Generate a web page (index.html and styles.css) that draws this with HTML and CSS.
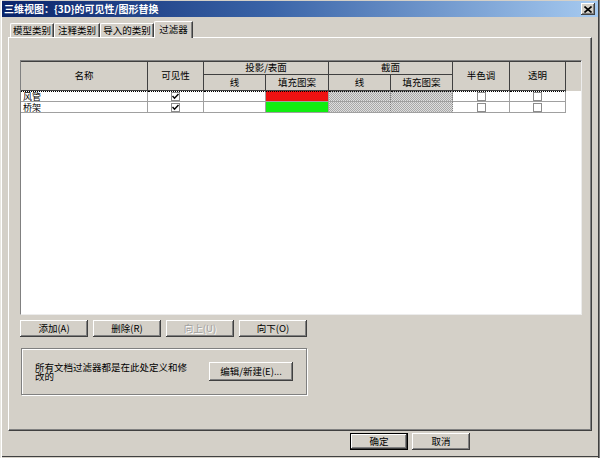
FILE: index.html
```html
<!DOCTYPE html>
<html>
<head>
<meta charset="utf-8">
<link rel="stylesheet" href="styles.css">
</head>
<body>
<div class="window">
  <div class="titlebar">
    <span class="title">三维视图：{3D}的可见性/图形替换</span>
    <span class="close"><svg width="8" height="7" viewBox="0 0 8 7"><path d="M0.5 0.5 L7.5 6.5 M7.5 0.5 L0.5 6.5" stroke="#000" stroke-width="1.6"/></svg></span>
  </div>
  <div class="tabs">
    <div class="tab t1">模型类别</div>
    <div class="tab t2">注释类别</div>
    <div class="tab t3">导入的类别</div>
    <div class="tab active">过滤器</div>
  </div>
  <div class="panel">
    <div class="frame">
      <div class="thead">
        <div class="th r2">名称</div>
        <div class="th r2">可见性</div>
        <div class="th c2">投影/表面</div>
        <div class="th c2">截面</div>
        <div class="th r2">半色调</div>
        <div class="th r2">透明</div>
        <div class="th r2 last"></div>
        <div class="th">线</div>
        <div class="th">填充图案</div>
        <div class="th">线</div>
        <div class="th">填充图案</div>
      </div>
      <div class="row first">
        <div class="td name">风管</div>
        <div class="td center"><span class="cb"><svg width="7" height="7" viewBox="0 0 7 7"><path d="M0.5 3 L2.5 5.2 L6.5 1" fill="none" stroke="#000" stroke-width="1.5"/></svg></span></div>
        <div class="td"></div>
        <div class="td red"></div>
        <div class="td hatch"></div>
        <div class="td hatch"></div>
        <div class="td center"><span class="cb"></span></div>
        <div class="td center"><span class="cb"></span></div>
      </div>
      <div class="row">
        <div class="td name">桥架</div>
        <div class="td center"><span class="cb"><svg width="7" height="7" viewBox="0 0 7 7"><path d="M0.5 3 L2.5 5.2 L6.5 1" fill="none" stroke="#000" stroke-width="1.5"/></svg></span></div>
        <div class="td"></div>
        <div class="td green"></div>
        <div class="td hatch"></div>
        <div class="td hatch"></div>
        <div class="td center"><span class="cb"></span></div>
        <div class="td center"><span class="cb"></span></div>
      </div>
    </div>
    <div class="btnrow">
      <button class="btn">添加(A)</button>
      <button class="btn">删除(R)</button>
      <button class="btn" disabled>向上(U)</button>
      <button class="btn">向下(O)</button>
    </div>
    <div class="group">
      <p class="note">所有文档过滤器都是在此处定义和修改的</p>
      <button class="btn edit">编辑/新建(E)...</button>
    </div>
  </div>
  <div class="footer">
    <button class="btn ok">确定</button>
    <button class="btn cancel">取消</button>
  </div>
</div>
</body>
</html>
```
FILE: styles.css
```css
* { box-sizing: border-box; margin: 0; padding: 0; }
html, body { width: 600px; height: 458px; overflow: hidden; background: #d4d0c8; }
body {
  font-family: "Noto Sans CJK SC", "Liberation Sans", sans-serif;
  font-size: 9.5px;
  line-height: 1;
  color: #000;
}
.window {
  width: 600px;
  height: 458px;
  padding: 1px 2px 0 2px;
  box-shadow: inset 1px 0 #e8e6e0, inset 2px 0 #fff, inset -1px 0 #808080, inset -2px 0 #404040, inset 0 -1px #d4d0c8, inset 0 -2px #404040;
}
.titlebar {
  height: 16px;
  display: flex;
  align-items: center;
  padding: 0 3px 0 2px;
  background: linear-gradient(to right, #0a246a, #3a64a8 45%, #a6caf0);
}
.title { color: #fff; font-weight: bold; font-size: 10px; }
.close {
  margin-left: auto;
  width: 14px;
  height: 12px;
  background: #d4d0c8;
  display: flex;
  align-items: center;
  justify-content: center;
  box-shadow: inset -1px -1px #404040, inset 1px 1px #fff, inset -2px -2px #808080;
}
.tabs {
  display: flex;
  align-items: flex-end;
  height: 17px;
  margin: 4px 0 -1px 8px;
  position: relative;
  z-index: 1;
}
.tab {
  height: 14px;
  margin-bottom: 1px;
  display: flex;
  align-items: center;
  justify-content: center;
  background: #d4d0c8;
  border-top: 1px solid #fff;
  border-left: 1px solid #fff;
  border-right: 1px solid #404040;
  border-top-left-radius: 2px;
  box-shadow: inset -1px 0 #808080;
}
.t1 { width: 44px; }
.t2 { width: 46px; }
.t3 { width: 54px; }
.tab.active { width: 39px; height: 17px; margin-bottom: 0; }
.panel {
  height: 394px;
  margin: 0 6px;
  border: 1px solid;
  border-color: #fff #404040 #404040 #fff;
  box-shadow: inset -1px -1px #808080;
  padding: 22px 0 0 11px;
}
.frame {
  width: 562px;
  height: 255px;
  background: #fff;
  border: 1px solid;
  border-color: #808080 #ececec #ececec #808080;
}
.thead {
  display: grid;
  grid-template-columns: 127px 56px 62px 63px 62px 62px 57px 56px 1fr;
  grid-template-rows: 13px 16px;
  border-top: 1px solid #404040;
}
.th {
  background: #d4d0c8;
  border-right: 1px solid #404040;
  border-bottom: 1px solid #404040;
  display: flex;
  align-items: center;
  justify-content: center;
}
.r2 { grid-row: span 2; }
.c2 { grid-column: span 2; }
.th.last { border: none; }
.row {
  display: grid;
  grid-template-columns: 127px 56px 62px 63px 62px 62px 57px 56px;
  height: 11px;
}
.td {
  border-right: 1px solid #a0a0a0;
  border-bottom: 1px solid #a0a0a0;
}
.row.first .td { border-top: 1px dotted #000; }
.name {
  padding-left: 2px;
  display: flex;
  align-items: center;
  font-size: 9px;
  line-height: 9px;
  overflow: hidden;
}
.center { display: flex; align-items: center; justify-content: center; }
.cb {
  width: 9px;
  height: 9px;
  border: 1px solid #8c8c8c;
  background: #fff;
  display: flex;
  align-items: center;
  justify-content: center;
}
.red { background: #ee1111; }
.green { background: #11ee11; }
.hatch {
  background: repeating-conic-gradient(#a8a8a8 0 25%, #dedede 0 50%) 0 0 / 2px 2px;
  border-right: 1px dotted #808080;
}
.btnrow {
  display: flex;
  gap: 5px;
  margin-top: 5px;
}
.btn {
  font: inherit;
  color: #000;
  width: 68px;
  height: 17px;
  background: #d4d0c8;
  border: none;
  box-shadow: inset -1px -1px #404040, inset 1px 1px #fff, inset -2px -2px #808080;
  display: flex;
  align-items: center;
  justify-content: center;
}
.btn:disabled { color: #a0a0a0; text-shadow: 1px 1px #fff; }
.group {
  margin: 11px 0 0 1px;
  width: 286px;
  height: 47px;
  border: 1px solid #808080;
  box-shadow: 1px 1px 0 #fff, inset 1px 1px #fff;
  display: flex;
  align-items: center;
  padding-left: 13px;
}
.note { width: 154px; line-height: 9px; }
.btn.edit { margin-left: 20px; width: 84px; height: 19px; }
.footer {
  display: flex;
  gap: 4px;
  margin-top: 2px;
  padding-left: 348px;
}
.btn.ok {
  width: 58px;
  border: 1px solid #000;
}
.btn.cancel { width: 58px; }
```
